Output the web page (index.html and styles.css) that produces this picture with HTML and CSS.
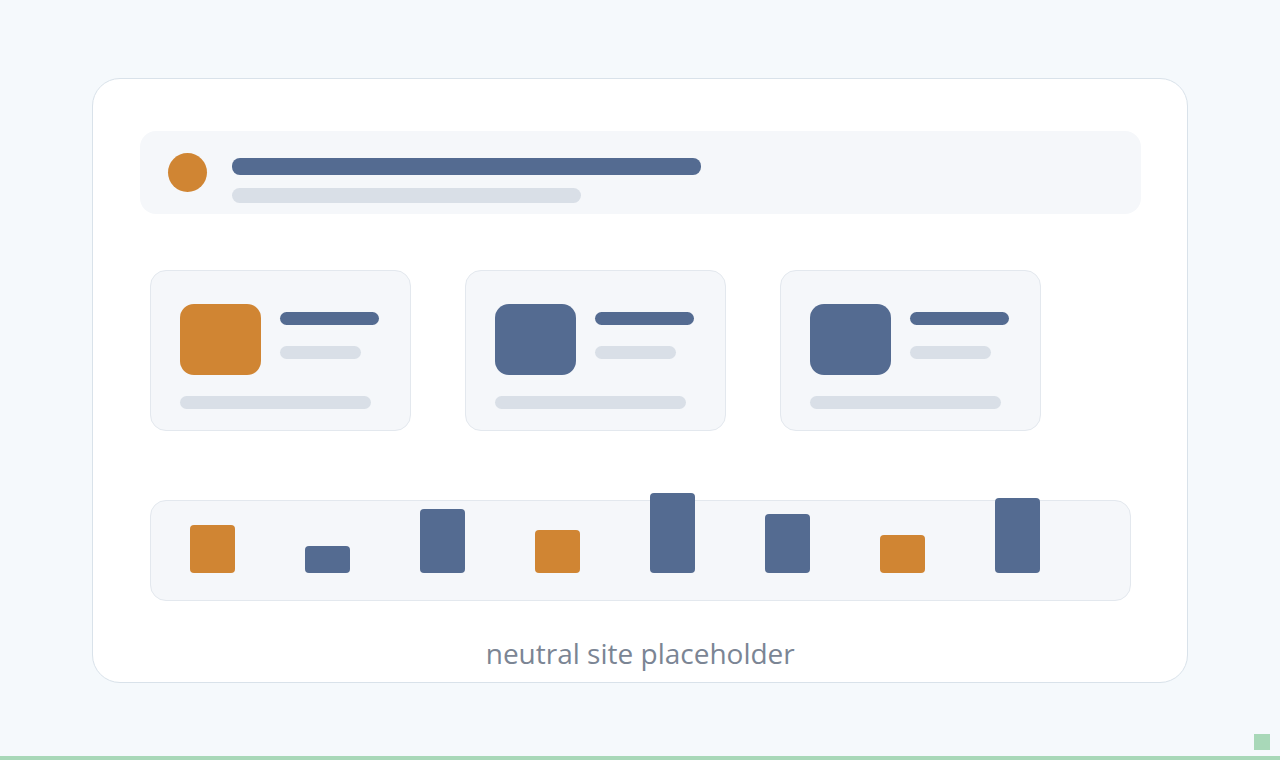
FILE: index.html
```html
<!DOCTYPE html>
<html lang="en">
<head>
<meta charset="utf-8">
<title>neutral site placeholder</title>
<link rel="stylesheet" href="styles.css">
</head>
<body>
<div class="page">
  <main class="main">
    <section class="frame">
      <div class="hero">
        <span class="dot"></span>
        <div class="hero-lines">
          <span class="line line-strong hero-l1"></span>
          <span class="line line-soft hero-l2"></span>
        </div>
      </div>
      <div class="cards">
        <div class="card">
          <div class="card-top">
            <span class="thumb thumb-orange"></span>
            <div class="card-lines">
              <span class="line line-strong card-l1"></span>
              <span class="line line-soft card-l2"></span>
            </div>
          </div>
          <span class="line line-soft card-l3"></span>
        </div>
        <div class="card">
          <div class="card-top">
            <span class="thumb thumb-blue"></span>
            <div class="card-lines">
              <span class="line line-strong card-l1"></span>
              <span class="line line-soft card-l2"></span>
            </div>
          </div>
          <span class="line line-soft card-l3"></span>
        </div>
        <div class="card">
          <div class="card-top">
            <span class="thumb thumb-blue"></span>
            <div class="card-lines">
              <span class="line line-strong card-l1"></span>
              <span class="line line-soft card-l2"></span>
            </div>
          </div>
          <span class="line line-soft card-l3"></span>
        </div>
      </div>
      <div class="chart">
        <span class="bar bar-orange" style="height:48px"></span>
        <span class="bar bar-blue" style="height:27px"></span>
        <span class="bar bar-blue" style="height:64px"></span>
        <span class="bar bar-orange" style="height:43px"></span>
        <span class="bar bar-blue" style="height:80px"></span>
        <span class="bar bar-blue" style="height:59px"></span>
        <span class="bar bar-orange" style="height:38px"></span>
        <span class="bar bar-blue" style="height:75px"></span>
      </div>
      <p class="caption">neutral site placeholder</p>
    </section>
  </main>
  <div class="corner"><span class="corner-mark"></span></div>
  <div class="rule"></div>
</div>
</body>
</html>
```
FILE: styles.css
```css
* { box-sizing: border-box; }
html, body { margin: 0; padding: 0; }
body {
  background: #f5f9fc;
  font-family: "Open Sans", "Noto Sans", sans-serif;
}
.page {
  height: 760px;
  display: flex;
  flex-direction: column;
}
.main {
  flex: 1;
  padding-top: 78px;
}
.frame {
  width: 1096px;
  height: 605px;
  margin-left: 92px;
  background: #ffffff;
  border: 1.5px solid #d9e2ea;
  border-radius: 28px;
  padding: 51.5px 46px 0 46.5px;
}
.line {
  display: block;
  border-radius: 8px;
}
.line-strong { background: #546b91; }
.line-soft { background: #d9dfe7; }

.hero {
  width: 1001px;
  height: 83px;
  background: #f5f7fa;
  border-radius: 16px;
  display: flex;
  align-items: flex-start;
  padding-left: 28px;
}
.dot {
  width: 39px;
  height: 39px;
  border-radius: 50%;
  background: #d08533;
  margin-top: 22.5px;
  flex: none;
}
.hero-lines {
  margin-left: 25px;
  padding-top: 27px;
}
.hero-l1 { width: 469px; height: 17px; }
.hero-l2 { width: 349px; height: 15px; margin-top: 13px; }

.cards {
  display: flex;
  gap: 54px;
  margin-top: 56px;
  padding-left: 10px;
}
.card {
  width: 261px;
  height: 161px;
  background: #f5f7fa;
  border: 1px solid #e3e8ee;
  border-radius: 16px;
  padding: 33px 29px 0 29px;
}
.card-top {
  display: flex;
  align-items: flex-start;
}
.thumb {
  width: 81px;
  height: 71px;
  border-radius: 14px;
  flex: none;
}
.thumb-orange { background: #d08533; }
.thumb-blue { background: #546b91; }
.card-lines {
  margin-left: 19px;
  padding-top: 8px;
}
.card-l1 { width: 99px; height: 13px; }
.card-l2 { width: 81px; height: 13px; margin-top: 21px; }
.card-l3 { width: 191px; height: 13px; margin-top: 21px; }

.chart {
  width: 981px;
  height: 101px;
  margin-top: 69px;
  margin-left: 10px;
  background: #f5f7fa;
  border: 1px solid #e3e8ee;
  border-radius: 16px;
  display: flex;
  align-items: flex-end;
  gap: 70px;
  padding: 0 0 27px 39px;
}
.bar {
  display: block;
  width: 45px;
  border-radius: 4px;
  flex: none;
}
.bar-orange { background: #d08533; }
.bar-blue { background: #546b91; }

.caption {
  margin: 34px 0 0 0;
  text-align: center;
  font-size: 28px;
  line-height: 36px;
  color: #7b8594;
}

.corner {
  display: flex;
  justify-content: flex-end;
  padding-right: 10px;
  margin-bottom: 6px;
}
.corner-mark {
  display: block;
  width: 16px;
  height: 16px;
  background: #a8d8b8;
}
.rule {
  height: 4px;
  background: #a8d8b8;
}
```
